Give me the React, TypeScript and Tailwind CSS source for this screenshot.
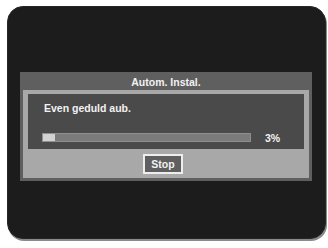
export default function App() {
  return (
    <div className="w-[328px] h-[248px] bg-white pt-[6px] pl-[7px] font-['Liberation_Sans',Arial,sans-serif] font-bold text-[10.5px] leading-[12px] text-[#f2f2f2]">
      <div className="w-[319px] h-[233px] rounded-[16px] bg-[#1c1c1c] border border-[#262626] shadow-[1px_2px_0_#8a8a8a] pt-[65px] pl-[12px]">
        <div className="w-[292px] bg-[#5f5f5f] px-[3px] pb-[3px]">
          <div className="h-[18px] flex items-center justify-center pt-[2px]">
            Autom. Instal.
          </div>
          <div className="bg-[#a8a8a8] pt-[4px] px-[5px] pb-[4px]">
            <div className="h-[55px] bg-[#4a4a4a] flex flex-col pt-[8px]">
              <p className="pl-[16px]">Even geduld aub.</p>
              <div className="mt-[19px] ml-[14px] h-[9px] flex items-center gap-[14px]">
                <div className="w-[209px] h-[9px] bg-[#7b7b7b] border border-[#8f8f8f] flex">
                  <div className="w-[12px] h-full bg-[#d2d2d2]" />
                </div>
                <span>3%</span>
              </div>
            </div>
            <div className="flex justify-center mt-[5px]">
              <button className="w-[40px] h-[20px] mr-[6px] bg-[#5f5f5f] border-2 border-[#eeeeee] flex items-center justify-center">
                Stop
              </button>
            </div>
          </div>
        </div>
      </div>
    </div>
  );
}
